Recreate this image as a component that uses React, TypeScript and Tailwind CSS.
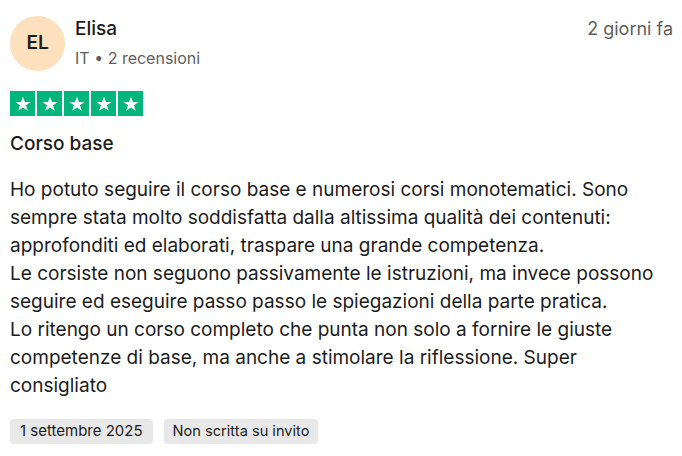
import React from "react";

function Star() {
  return (
    <svg viewBox="0 0 24 24" className="w-[18px] h-[18px]" fill="#ffffff">
      <path d="M12 2.2l2.6 7.1h7.5l-6.1 4.5 2.3 7.3L12 16.6l-6.3 4.5 2.3-7.3-6.1-4.5h7.5z" />
    </svg>
  );
}

export default function App() {
  return (
    <div className="w-[682px] h-[456px] bg-white text-[#1c1c1c] px-[10px] pt-[16px] font-['Inter',sans-serif]">
      <div className="flex items-start">
        <div className="w-[55px] h-[55px] rounded-full bg-[#fde0bd] flex items-center justify-center text-[19px] font-semibold shrink-0">
          EL
        </div>
        <div className="ml-[10px] flex-1">
          <div className="text-[19px] font-medium leading-[26px]">Elisa</div>
          <div className="text-[16px] text-[#5e5e5e] leading-[24px] mt-[4px]">IT • 2 recensioni</div>
        </div>
        <div className="text-[18px] text-[#5e5e5e] leading-[26px] -mr-[1px]">2 giorni fa</div>
      </div>

      <div className="flex gap-[2px] mt-[20px]">
        {[0, 1, 2, 3, 4].map((i) => (
          <div key={i} className="w-[25px] h-[25px] bg-[#00b67a] flex items-center justify-center">
            <Star />
          </div>
        ))}
      </div>

      <div className="text-[19px] font-medium leading-[26px] mt-[15px]">Corso base</div>

      <p className="text-[19px] leading-[28px] mt-[19px]">
        Ho potuto seguire il corso base e numerosi corsi monotematici. Sono sempre stata molto soddisfatta dalla altissima qualità dei contenuti: approfonditi ed elaborati, traspare una grande competenza.
        <br />
        Le corsiste non seguono passivamente le istruzioni, ma invece possono seguire ed eseguire passo passo le spiegazioni della parte pratica.
        <br />
        Lo ritengo un corso completo che punta non solo a fornire le giuste competenze di base, ma anche a stimolare la riflessione. Super consigliato
      </p>

      <div className="flex gap-[11px] mt-[19px]">
        <span className="bg-[#e8e8e8] rounded-[4px] px-[10px] h-[25px] flex items-center text-[15px]">1 settembre 2025</span>
        <span className="bg-[#e8e8e8] rounded-[4px] px-[9px] h-[25px] flex items-center text-[14.6px]">Non scritta su invito</span>
      </div>
    </div>
  );
}
